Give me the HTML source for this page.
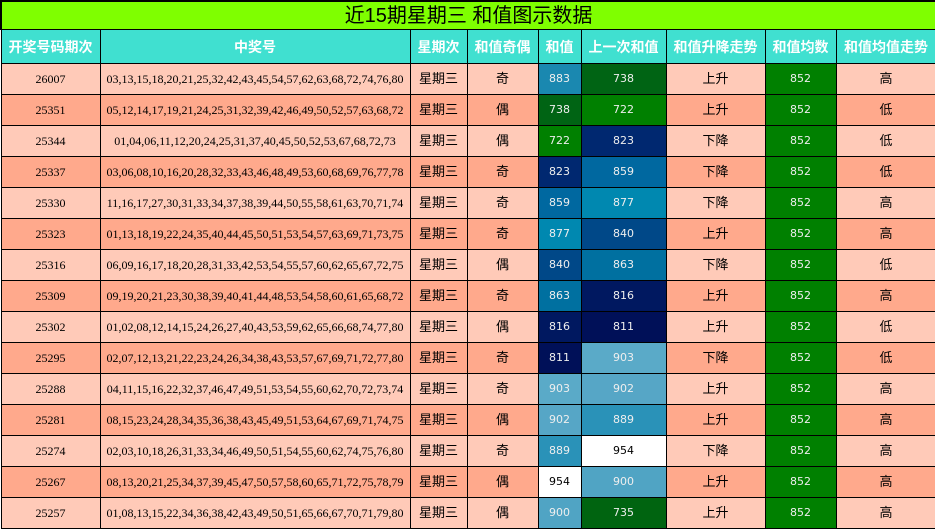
<!DOCTYPE html>
<html><head><meta charset="utf-8"><style>
body{margin:0;width:935px;height:530px;overflow:hidden;background:#fff;font-family:"Liberation Serif","Noto Sans CJK SC",serif;}
table{border-collapse:collapse;width:935px;table-layout:fixed;}
td,th{border:1px solid #000;text-align:center;padding:0;font-size:12px;line-height:14px;}
.t td{background:#7fff00;height:27px;font-size:20px;line-height:24px;font-family:"Liberation Sans","Noto Sans CJK SC",sans-serif;border-width:2px 2px 1px 2px;}
th{background:#40e0d0;color:#fff;height:33px;font-size:14px;font-family:"Liberation Sans","Noto Sans CJK SC",sans-serif;font-weight:bold;}
tr.r td{height:30px;}
tr.a td{background:#ffcab8;}
tr.b td{background:#ffa98c;}
.cn{font-family:"Liberation Sans","Noto Sans CJK SC",sans-serif;font-size:13px;}
.s{color:#eee;font-family:"DejaVu Sans",sans-serif;font-size:11px;}
td.s.w{color:#000;}
</style></head><body>
<table>
<colgroup><col style="width:99px"><col style="width:310px"><col style="width:57px"><col style="width:71px"><col style="width:43px"><col style="width:85px"><col style="width:99px"><col style="width:71px"><col style="width:100px"></colgroup>
<tr class="t"><td colspan="9">近15期星期三 和值图示数据</td></tr>
<tr><th>开奖号码期次</th><th>中奖号</th><th>星期次</th><th>和值奇偶</th><th>和值</th><th>上一次和值</th><th>和值升降走势</th><th>和值均数</th><th>和值均值走势</th></tr>
<tr class="r a"><td>26007</td><td>03,13,15,18,20,21,25,32,42,43,45,54,57,62,63,68,72,74,76,80</td><td class="cn">星期三</td><td class="cn">奇</td><td class="s" style="background:#1a88b0!important">883</td><td class="s" style="background:#006414!important">738</td><td class="cn">上升</td><td class="s" style="background:#008000!important">852</td><td class="cn">高</td></tr>
<tr class="r b"><td>25351</td><td>05,12,14,17,19,21,24,25,31,32,39,42,46,49,50,52,57,63,68,72</td><td class="cn">星期三</td><td class="cn">偶</td><td class="s" style="background:#006414!important">738</td><td class="s" style="background:#008000!important">722</td><td class="cn">上升</td><td class="s" style="background:#008000!important">852</td><td class="cn">低</td></tr>
<tr class="r a"><td>25344</td><td>01,04,06,11,12,20,24,25,31,37,40,45,50,52,53,67,68,72,73</td><td class="cn">星期三</td><td class="cn">偶</td><td class="s" style="background:#008000!important">722</td><td class="s" style="background:#002870!important">823</td><td class="cn">下降</td><td class="s" style="background:#008000!important">852</td><td class="cn">低</td></tr>
<tr class="r b"><td>25337</td><td>03,06,08,10,16,20,28,32,33,43,46,48,49,53,60,68,69,76,77,78</td><td class="cn">星期三</td><td class="cn">奇</td><td class="s" style="background:#002870!important">823</td><td class="s" style="background:#0068a0!important">859</td><td class="cn">下降</td><td class="s" style="background:#008000!important">852</td><td class="cn">低</td></tr>
<tr class="r a"><td>25330</td><td>11,16,17,27,30,31,33,34,37,38,39,44,50,55,58,61,63,70,71,74</td><td class="cn">星期三</td><td class="cn">奇</td><td class="s" style="background:#0068a0!important">859</td><td class="s" style="background:#0088b0!important">877</td><td class="cn">下降</td><td class="s" style="background:#008000!important">852</td><td class="cn">高</td></tr>
<tr class="r b"><td>25323</td><td>01,13,18,19,22,24,35,40,44,45,50,51,53,54,57,63,69,71,73,75</td><td class="cn">星期三</td><td class="cn">奇</td><td class="s" style="background:#0088b0!important">877</td><td class="s" style="background:#004888!important">840</td><td class="cn">上升</td><td class="s" style="background:#008000!important">852</td><td class="cn">高</td></tr>
<tr class="r a"><td>25316</td><td>06,09,16,17,18,20,28,31,33,42,53,54,55,57,60,62,65,67,72,75</td><td class="cn">星期三</td><td class="cn">偶</td><td class="s" style="background:#004888!important">840</td><td class="s" style="background:#0070a0!important">863</td><td class="cn">下降</td><td class="s" style="background:#008000!important">852</td><td class="cn">低</td></tr>
<tr class="r b"><td>25309</td><td>09,19,20,21,23,30,38,39,40,41,44,48,53,54,58,60,61,65,68,72</td><td class="cn">星期三</td><td class="cn">奇</td><td class="s" style="background:#0070a0!important">863</td><td class="s" style="background:#001860!important">816</td><td class="cn">上升</td><td class="s" style="background:#008000!important">852</td><td class="cn">高</td></tr>
<tr class="r a"><td>25302</td><td>01,02,08,12,14,15,24,26,27,40,43,53,59,62,65,66,68,74,77,80</td><td class="cn">星期三</td><td class="cn">偶</td><td class="s" style="background:#001860!important">816</td><td class="s" style="background:#001058!important">811</td><td class="cn">上升</td><td class="s" style="background:#008000!important">852</td><td class="cn">低</td></tr>
<tr class="r b"><td>25295</td><td>02,07,12,13,21,22,23,24,26,34,38,43,53,57,67,69,71,72,77,80</td><td class="cn">星期三</td><td class="cn">奇</td><td class="s" style="background:#001058!important">811</td><td class="s" style="background:#5aaac8!important">903</td><td class="cn">下降</td><td class="s" style="background:#008000!important">852</td><td class="cn">低</td></tr>
<tr class="r a"><td>25288</td><td>04,11,15,16,22,32,37,46,47,49,51,53,54,55,60,62,70,72,73,74</td><td class="cn">星期三</td><td class="cn">奇</td><td class="s" style="background:#5aaac8!important">903</td><td class="s" style="background:#56a6c6!important">902</td><td class="cn">上升</td><td class="s" style="background:#008000!important">852</td><td class="cn">高</td></tr>
<tr class="r b"><td>25281</td><td>08,15,23,24,28,34,35,36,38,43,45,49,51,53,64,67,69,71,74,75</td><td class="cn">星期三</td><td class="cn">偶</td><td class="s" style="background:#56a6c6!important">902</td><td class="s" style="background:#2a92b8!important">889</td><td class="cn">上升</td><td class="s" style="background:#008000!important">852</td><td class="cn">高</td></tr>
<tr class="r a"><td>25274</td><td>02,03,10,18,26,31,33,34,46,49,50,51,54,55,60,62,74,75,76,80</td><td class="cn">星期三</td><td class="cn">奇</td><td class="s" style="background:#2a92b8!important">889</td><td class="s w" style="background:#fff!important">954</td><td class="cn">下降</td><td class="s" style="background:#008000!important">852</td><td class="cn">高</td></tr>
<tr class="r b"><td>25267</td><td>08,13,20,21,25,34,37,39,45,47,50,57,58,60,65,71,72,75,78,79</td><td class="cn">星期三</td><td class="cn">偶</td><td class="s w" style="background:#fff!important">954</td><td class="s" style="background:#50a4c4!important">900</td><td class="cn">上升</td><td class="s" style="background:#008000!important">852</td><td class="cn">高</td></tr>
<tr class="r a"><td>25257</td><td>01,08,13,15,22,34,36,38,42,43,49,50,51,65,66,67,70,71,79,80</td><td class="cn">星期三</td><td class="cn">偶</td><td class="s" style="background:#50a4c4!important">900</td><td class="s" style="background:#006410!important">735</td><td class="cn">上升</td><td class="s" style="background:#008000!important">852</td><td class="cn">高</td></tr>
</table>
</body></html>
